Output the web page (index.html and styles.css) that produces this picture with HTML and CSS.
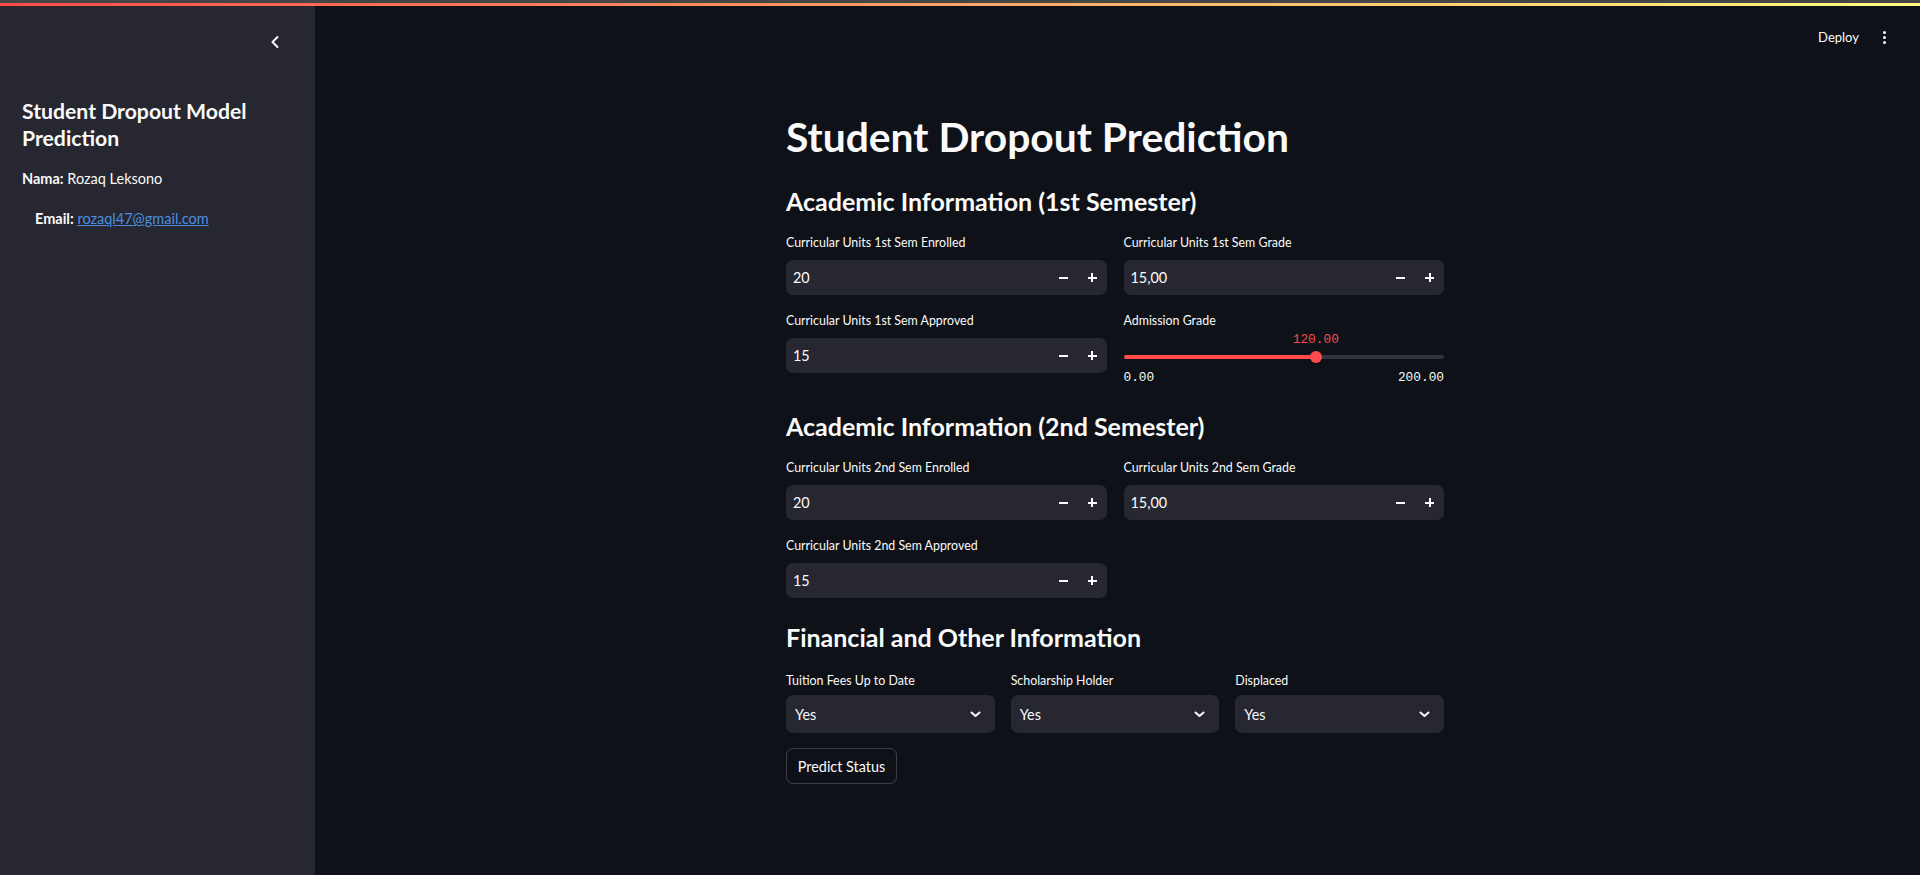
FILE: index.html
```html
<!DOCTYPE html>
<html lang="en">
<head>
<meta charset="utf-8">
<title>Student Dropout Prediction</title>
<link rel="stylesheet" href="styles.css">
</head>
<body>
<div class="chrome-strip"></div>
<div class="decoration"></div>
<div class="app">
  <aside class="sidebar">
    <div class="sb-head">
      <button class="collapse" aria-label="Collapse sidebar">
        <svg width="10" height="14" viewBox="0 0 10 14"><path d="M7.5 2 L2.5 7 L7.5 12" fill="none" stroke="#fafafa" stroke-width="2" stroke-linecap="round" stroke-linejoin="round"/></svg>
      </button>
    </div>
    <div class="sb-content">
      <h2 class="sb-title">Student Dropout Model Prediction</h2>
      <p class="sb-line"><strong>Nama:</strong> Rozaq Leksono</p>
      <p class="sb-line sb-indent"><strong>Email:</strong> <a href="#">rozaql47@gmail.com</a></p>
    </div>
  </aside>
  <main class="main">
    <header class="header">
      <span class="deploy">Deploy</span>
      <span class="kebab"><i></i><i></i><i></i></span>
    </header>
    <div class="block">
      <h1 class="title">Student Dropout Prediction</h1>

      <h3 class="section">Academic Information (1st Semester)</h3>
      <div class="grid2">
        <div class="field">
          <label class="lbl">Curricular Units 1st Sem Enrolled</label>
          <div class="numinput">
            <span class="val">20</span>
            <span class="step"><i class="minus"></i></span>
            <span class="step"><i class="plus"></i></span>
          </div>
        </div>
        <div class="field">
          <label class="lbl">Curricular Units 1st Sem Grade</label>
          <div class="numinput">
            <span class="val">15,00</span>
            <span class="step"><i class="minus"></i></span>
            <span class="step"><i class="plus"></i></span>
          </div>
        </div>
        <div class="field">
          <label class="lbl">Curricular Units 1st Sem Approved</label>
          <div class="numinput">
            <span class="val">15</span>
            <span class="step"><i class="minus"></i></span>
            <span class="step"><i class="plus"></i></span>
          </div>
        </div>
        <div class="field">
          <label class="lbl lbl-slider">Admission Grade</label>
          <div class="slider">
            <div class="slider-area">
              <div class="track"><div class="fill" style="width:60%"></div></div>
              <div class="thumb" style="left:60%"></div>
              <div class="thumb-val" style="left:60%">120.00</div>
            </div>
            <div class="ticks"><span>0.00</span><span>200.00</span></div>
          </div>
        </div>
      </div>

      <h3 class="section">Academic Information (2nd Semester)</h3>
      <div class="grid2">
        <div class="field">
          <label class="lbl">Curricular Units 2nd Sem Enrolled</label>
          <div class="numinput">
            <span class="val">20</span>
            <span class="step"><i class="minus"></i></span>
            <span class="step"><i class="plus"></i></span>
          </div>
        </div>
        <div class="field">
          <label class="lbl">Curricular Units 2nd Sem Grade</label>
          <div class="numinput">
            <span class="val">15,00</span>
            <span class="step"><i class="minus"></i></span>
            <span class="step"><i class="plus"></i></span>
          </div>
        </div>
        <div class="field">
          <label class="lbl">Curricular Units 2nd Sem Approved</label>
          <div class="numinput">
            <span class="val">15</span>
            <span class="step"><i class="minus"></i></span>
            <span class="step"><i class="plus"></i></span>
          </div>
        </div>
      </div>

      <h3 class="section">Financial and Other Information</h3>
      <div class="grid3">
        <div class="field">
          <label class="lbl">Tuition Fees Up to Date</label>
          <div class="select"><span>Yes</span>
            <svg width="11" height="7" viewBox="0 0 11 7"><path d="M1.5 1.5 L5.5 5 L9.5 1.5" fill="none" stroke="#fafafa" stroke-width="2" stroke-linecap="round" stroke-linejoin="round"/></svg>
          </div>
        </div>
        <div class="field">
          <label class="lbl">Scholarship Holder</label>
          <div class="select"><span>Yes</span>
            <svg width="11" height="7" viewBox="0 0 11 7"><path d="M1.5 1.5 L5.5 5 L9.5 1.5" fill="none" stroke="#fafafa" stroke-width="2" stroke-linecap="round" stroke-linejoin="round"/></svg>
          </div>
        </div>
        <div class="field">
          <label class="lbl">Displaced</label>
          <div class="select"><span>Yes</span>
            <svg width="11" height="7" viewBox="0 0 11 7"><path d="M1.5 1.5 L5.5 5 L9.5 1.5" fill="none" stroke="#fafafa" stroke-width="2" stroke-linecap="round" stroke-linejoin="round"/></svg>
          </div>
        </div>
      </div>

      <button class="btn">Predict Status</button>
    </div>
  </main>
</div>
</body>
</html>
```
FILE: styles.css
```css
* { box-sizing: border-box; }
html, body {
  margin: 0;
  padding: 0;
  height: 100%;
  background: #0e1117;
  color: #fafafa;
  font-family: "Lato", "Liberation Sans", sans-serif;
  overflow: hidden;
}
.chrome-strip { height: 3px; background: #454545; }
.decoration {
  height: 3px;
  background: linear-gradient(90deg, #ff4b4b 0%, #fffd80 100%);
}
.app { display: flex; height: 869px; }

/* sidebar */
.sidebar {
  width: 315px;
  flex: none;
  background: #262730;
}
.sb-head {
  height: 72px;
  display: flex;
  align-items: center;
  justify-content: flex-end;
  padding-right: 35px;
}
.collapse {
  background: none;
  border: 0;
  padding: 0;
  width: 10px;
  height: 14px;
  display: flex;
}
.sb-content { padding: 20px 22px 0 22px; }
.sb-title {
  margin: 0;
  font-size: 21.2px;
  line-height: 27px;
  font-weight: 700;
}
.sb-line {
  margin: 16px 0 0 0;
  font-size: 14.5px;
  line-height: 22px;
}
.sb-indent { margin-top: 18px; padding-left: 13px; }
.sb-line strong { font-weight: 700; }
.sb-line a { color: #4a8fe2; text-decoration: underline; }

/* main */
.main { flex: 1; padding-right: 5px; }
.header {
  height: 62px;
  display: flex;
  align-items: center;
  justify-content: flex-end;
  padding-right: 29px;
  gap: 24px;
}
.deploy { font-size: 13px; }
.kebab { display: flex; flex-direction: column; gap: 2px; }
.kebab i { width: 3px; height: 3px; border-radius: 50%; background: #fafafa; display: block; }

.block {
  width: 658px;
  margin: 0 auto;
  padding-top: 42px;
}
.title {
  margin: 0;
  font-size: 40.8px;
  line-height: 53px;
  font-weight: 700;
}
.section {
  margin: 20px 0 0 0;
  font-size: 25px;
  line-height: 36px;
  font-weight: 700;
}
.section + .grid2 { margin-top: 14px; }
.section + .grid3 { margin-top: 16px; }
.grid2 + .section { margin-top: 21px; }
.grid2 {
  display: grid;
  grid-template-columns: 1fr 1fr;
  column-gap: 17px;
  row-gap: 16px;
  align-items: start;
}
.grid3 {
  display: grid;
  grid-template-columns: 1fr 1fr 1fr;
  column-gap: 16px;
}
.field { display: flex; flex-direction: column; }
.lbl {
  font-size: 12.4px;
  line-height: 20px;
  height: 20px;
  margin-bottom: 7px;
}
.lbl.lbl-slider { margin-bottom: 0; }
.grid3 .lbl { margin-bottom: 4px; }

.numinput {
  height: 35px;
  background: #262730;
  border-radius: 7px;
  display: flex;
  align-items: center;
}
.numinput .val {
  flex: 1;
  padding-left: 7px;
  font-size: 14.4px;
}
.step {
  width: 29px;
  height: 35px;
  display: flex;
  align-items: center;
  justify-content: center;
}
.step i { display: block; position: relative; width: 9px; height: 9px; }
.step i::before {
  content: "";
  position: absolute;
  left: 0; top: 3.5px;
  width: 9px; height: 2px;
  background: #fafafa;
}
.step i.plus::after {
  content: "";
  position: absolute;
  left: 3.5px; top: 0;
  width: 2px; height: 9px;
  background: #fafafa;
}

/* slider */
.slider { display: flex; flex-direction: column; padding: 2px 0 2px 0; }
.slider-area {
  position: relative;
  height: 34px;
}
.track {
  position: absolute;
  left: 0; right: 0;
  top: 22px;
  height: 4px;
  border-radius: 2px;
  background: #31333f;
}
.fill { height: 100%; background: #ff4b4b; border-radius: 2px; }
.thumb {
  position: absolute;
  top: 18px;
  width: 12px; height: 12px;
  margin-left: -6px;
  border-radius: 50%;
  background: #ff4b4b;
}
.thumb-val {
  position: absolute;
  top: 0;
  transform: translateX(-50%);
  font-family: "Liberation Mono", "DejaVu Sans Mono", monospace;
  font-size: 12.8px;
  line-height: 14px;
  color: #ff4b4b;
}
.ticks {
  display: flex;
  justify-content: space-between;
  font-family: "Liberation Mono", "DejaVu Sans Mono", monospace;
  font-size: 12.8px;
  line-height: 14px;
  margin-top: 4px;
}

/* select */
.select {
  height: 38px;
  background: #262730;
  border-radius: 7px;
  display: flex;
  align-items: center;
  justify-content: space-between;
  padding: 0 14px 0 9px;
  font-size: 14.4px;
}
.select svg { display: block; }

.btn {
  margin-top: 15px;
  height: 36px;
  width: 111px;
  background: transparent;
  border: 1px solid rgba(250, 250, 250, 0.2);
  border-radius: 7px;
  color: #fafafa;
  font-family: inherit;
  font-size: 14.4px;
  padding: 0;
}
```
